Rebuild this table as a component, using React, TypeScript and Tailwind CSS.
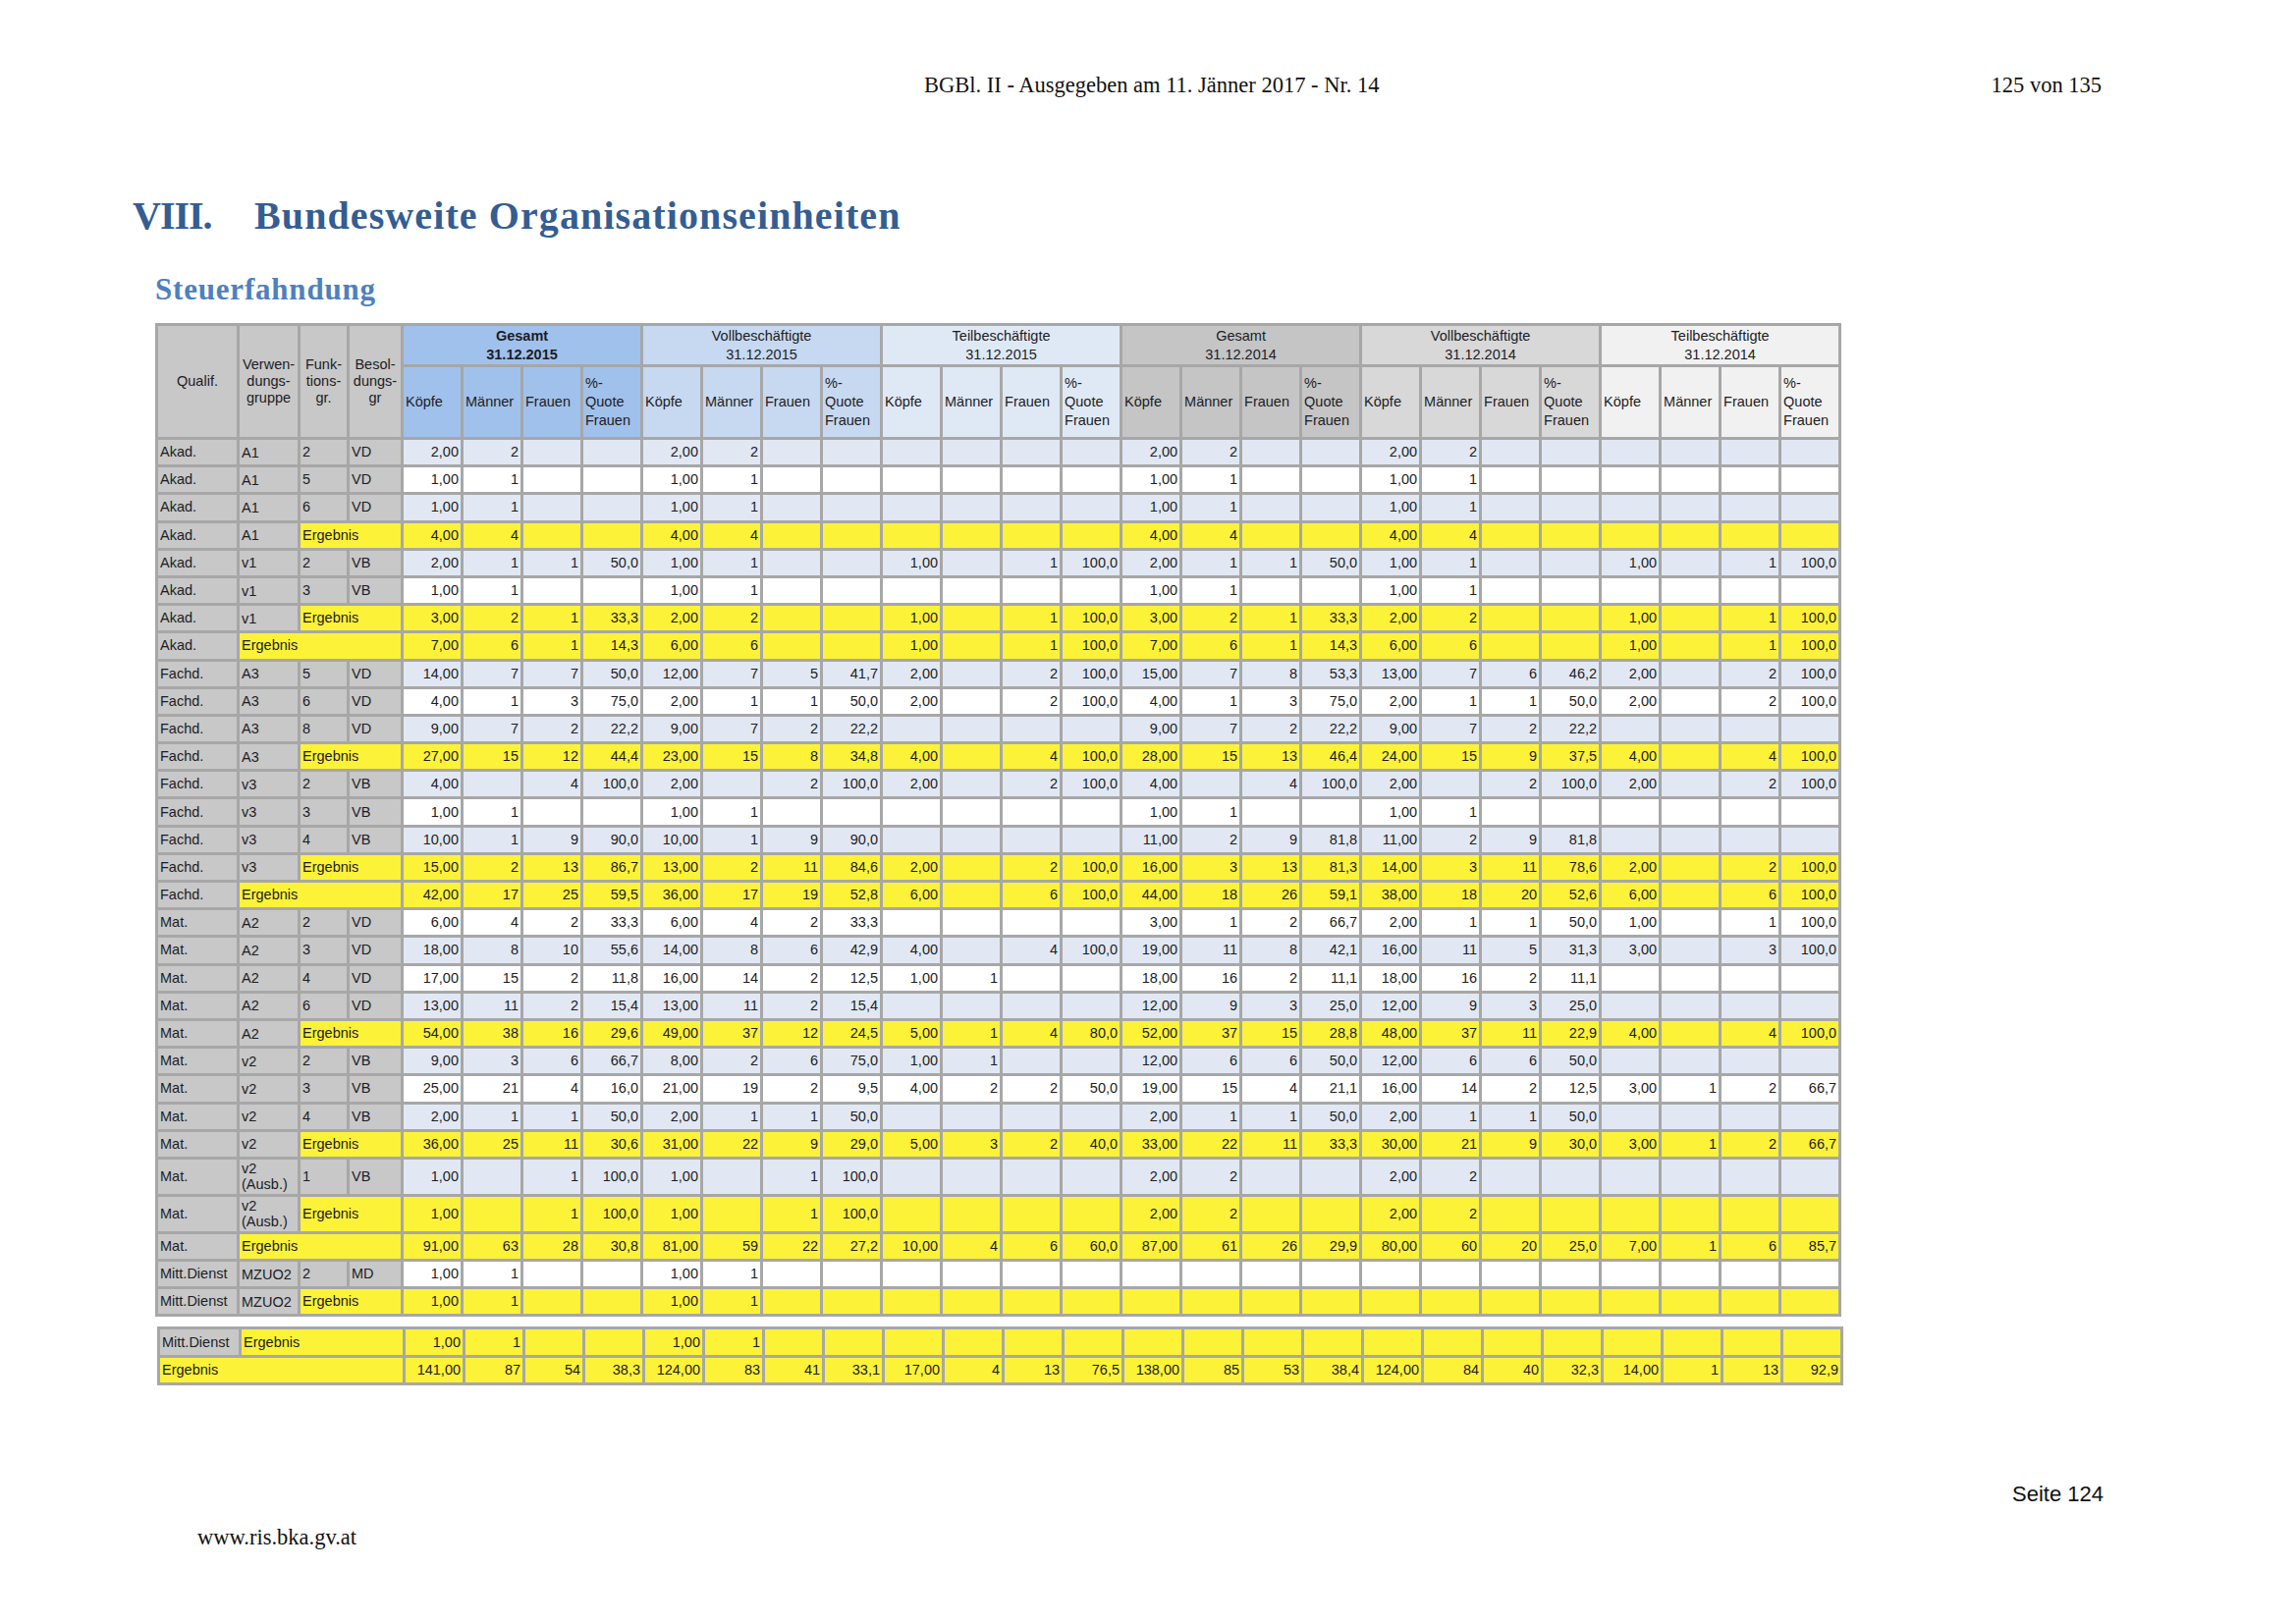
type Kind = 'row' | 'sub' | 'total'

type Row = {
  q: string
  v?: string
  f?: string
  b?: string
  kind: Kind
  tall?: boolean
  d: string
}

const rows: Row[] = [
  { q: 'Akad.', v: 'A1', f: '2', b: 'VD', kind: 'row', d: '2,00 2 _ _ 2,00 2 _ _ _ _ _ _ 2,00 2 _ _ 2,00 2 _ _ _ _ _ _' },
  { q: 'Akad.', v: 'A1', f: '5', b: 'VD', kind: 'row', d: '1,00 1 _ _ 1,00 1 _ _ _ _ _ _ 1,00 1 _ _ 1,00 1 _ _ _ _ _ _' },
  { q: 'Akad.', v: 'A1', f: '6', b: 'VD', kind: 'row', d: '1,00 1 _ _ 1,00 1 _ _ _ _ _ _ 1,00 1 _ _ 1,00 1 _ _ _ _ _ _' },
  { q: 'Akad.', v: 'A1', kind: 'sub', d: '4,00 4 _ _ 4,00 4 _ _ _ _ _ _ 4,00 4 _ _ 4,00 4 _ _ _ _ _ _' },
  { q: 'Akad.', v: 'v1', f: '2', b: 'VB', kind: 'row', d: '2,00 1 1 50,0 1,00 1 _ _ 1,00 _ 1 100,0 2,00 1 1 50,0 1,00 1 _ _ 1,00 _ 1 100,0' },
  { q: 'Akad.', v: 'v1', f: '3', b: 'VB', kind: 'row', d: '1,00 1 _ _ 1,00 1 _ _ _ _ _ _ 1,00 1 _ _ 1,00 1 _ _ _ _ _ _' },
  { q: 'Akad.', v: 'v1', kind: 'sub', d: '3,00 2 1 33,3 2,00 2 _ _ 1,00 _ 1 100,0 3,00 2 1 33,3 2,00 2 _ _ 1,00 _ 1 100,0' },
  { q: 'Akad.', kind: 'total', d: '7,00 6 1 14,3 6,00 6 _ _ 1,00 _ 1 100,0 7,00 6 1 14,3 6,00 6 _ _ 1,00 _ 1 100,0' },
  { q: 'Fachd.', v: 'A3', f: '5', b: 'VD', kind: 'row', d: '14,00 7 7 50,0 12,00 7 5 41,7 2,00 _ 2 100,0 15,00 7 8 53,3 13,00 7 6 46,2 2,00 _ 2 100,0' },
  { q: 'Fachd.', v: 'A3', f: '6', b: 'VD', kind: 'row', d: '4,00 1 3 75,0 2,00 1 1 50,0 2,00 _ 2 100,0 4,00 1 3 75,0 2,00 1 1 50,0 2,00 _ 2 100,0' },
  { q: 'Fachd.', v: 'A3', f: '8', b: 'VD', kind: 'row', d: '9,00 7 2 22,2 9,00 7 2 22,2 _ _ _ _ 9,00 7 2 22,2 9,00 7 2 22,2 _ _ _ _' },
  { q: 'Fachd.', v: 'A3', kind: 'sub', d: '27,00 15 12 44,4 23,00 15 8 34,8 4,00 _ 4 100,0 28,00 15 13 46,4 24,00 15 9 37,5 4,00 _ 4 100,0' },
  { q: 'Fachd.', v: 'v3', f: '2', b: 'VB', kind: 'row', d: '4,00 _ 4 100,0 2,00 _ 2 100,0 2,00 _ 2 100,0 4,00 _ 4 100,0 2,00 _ 2 100,0 2,00 _ 2 100,0' },
  { q: 'Fachd.', v: 'v3', f: '3', b: 'VB', kind: 'row', d: '1,00 1 _ _ 1,00 1 _ _ _ _ _ _ 1,00 1 _ _ 1,00 1 _ _ _ _ _ _' },
  { q: 'Fachd.', v: 'v3', f: '4', b: 'VB', kind: 'row', d: '10,00 1 9 90,0 10,00 1 9 90,0 _ _ _ _ 11,00 2 9 81,8 11,00 2 9 81,8 _ _ _ _' },
  { q: 'Fachd.', v: 'v3', kind: 'sub', d: '15,00 2 13 86,7 13,00 2 11 84,6 2,00 _ 2 100,0 16,00 3 13 81,3 14,00 3 11 78,6 2,00 _ 2 100,0' },
  { q: 'Fachd.', kind: 'total', d: '42,00 17 25 59,5 36,00 17 19 52,8 6,00 _ 6 100,0 44,00 18 26 59,1 38,00 18 20 52,6 6,00 _ 6 100,0' },
  { q: 'Mat.', v: 'A2', f: '2', b: 'VD', kind: 'row', d: '6,00 4 2 33,3 6,00 4 2 33,3 _ _ _ _ 3,00 1 2 66,7 2,00 1 1 50,0 1,00 _ 1 100,0' },
  { q: 'Mat.', v: 'A2', f: '3', b: 'VD', kind: 'row', d: '18,00 8 10 55,6 14,00 8 6 42,9 4,00 _ 4 100,0 19,00 11 8 42,1 16,00 11 5 31,3 3,00 _ 3 100,0' },
  { q: 'Mat.', v: 'A2', f: '4', b: 'VD', kind: 'row', d: '17,00 15 2 11,8 16,00 14 2 12,5 1,00 1 _ _ 18,00 16 2 11,1 18,00 16 2 11,1 _ _ _ _' },
  { q: 'Mat.', v: 'A2', f: '6', b: 'VD', kind: 'row', d: '13,00 11 2 15,4 13,00 11 2 15,4 _ _ _ _ 12,00 9 3 25,0 12,00 9 3 25,0 _ _ _ _' },
  { q: 'Mat.', v: 'A2', kind: 'sub', d: '54,00 38 16 29,6 49,00 37 12 24,5 5,00 1 4 80,0 52,00 37 15 28,8 48,00 37 11 22,9 4,00 _ 4 100,0' },
  { q: 'Mat.', v: 'v2', f: '2', b: 'VB', kind: 'row', d: '9,00 3 6 66,7 8,00 2 6 75,0 1,00 1 _ _ 12,00 6 6 50,0 12,00 6 6 50,0 _ _ _ _' },
  { q: 'Mat.', v: 'v2', f: '3', b: 'VB', kind: 'row', d: '25,00 21 4 16,0 21,00 19 2 9,5 4,00 2 2 50,0 19,00 15 4 21,1 16,00 14 2 12,5 3,00 1 2 66,7' },
  { q: 'Mat.', v: 'v2', f: '4', b: 'VB', kind: 'row', d: '2,00 1 1 50,0 2,00 1 1 50,0 _ _ _ _ 2,00 1 1 50,0 2,00 1 1 50,0 _ _ _ _' },
  { q: 'Mat.', v: 'v2', kind: 'sub', d: '36,00 25 11 30,6 31,00 22 9 29,0 5,00 3 2 40,0 33,00 22 11 33,3 30,00 21 9 30,0 3,00 1 2 66,7' },
  { q: 'Mat.', v: 'v2 (Ausb.)', f: '1', b: 'VB', kind: 'row', tall: true, d: '1,00 _ 1 100,0 1,00 _ 1 100,0 _ _ _ _ 2,00 2 _ _ 2,00 2 _ _ _ _ _ _' },
  { q: 'Mat.', v: 'v2 (Ausb.)', kind: 'sub', tall: true, d: '1,00 _ 1 100,0 1,00 _ 1 100,0 _ _ _ _ 2,00 2 _ _ 2,00 2 _ _ _ _ _ _' },
  { q: 'Mat.', kind: 'total', d: '91,00 63 28 30,8 81,00 59 22 27,2 10,00 4 6 60,0 87,00 61 26 29,9 80,00 60 20 25,0 7,00 1 6 85,7' },
  { q: 'Mitt.Dienst', v: 'MZUO2', f: '2', b: 'MD', kind: 'row', d: '1,00 1 _ _ 1,00 1 _ _ _ _ _ _ _ _ _ _ _ _ _ _ _ _ _ _' },
  { q: 'Mitt.Dienst', v: 'MZUO2', kind: 'sub', d: '1,00 1 _ _ 1,00 1 _ _ _ _ _ _ _ _ _ _ _ _ _ _ _ _ _ _' },
]

const groups = [
  { title: 'Gesamt', date: '31.12.2015', head: 'bg-[#a0c1ec]', bold: true },
  { title: 'Vollbeschäftigte', date: '31.12.2015', head: 'bg-[#c6d9f1]', bold: false },
  { title: 'Teilbeschäftigte', date: '31.12.2015', head: 'bg-[#dfe9f5]', bold: false },
  { title: 'Gesamt', date: '31.12.2014', head: 'bg-[#c5c5c5]', bold: false },
  { title: 'Vollbeschäftigte', date: '31.12.2014', head: 'bg-[#d8d8d8]', bold: false },
  { title: 'Teilbeschäftigte', date: '31.12.2014', head: 'bg-[#f1f1f1]', bold: false },
]

const label = 'bg-[#c8c8c8] px-[2px] text-left align-middle'
const yellow = 'bg-[#fcf238]'

function Cols() {
  return (
    <colgroup>
      <col className="w-[80px]" />
      <col className="w-[59px]" />
      <col className="w-[47px]" />
      <col className="w-[52px]" />
      {Array.from({ length: 24 }).map((_, i) => (
        <col key={i} className="w-[58px]" />
      ))}
    </colgroup>
  )
}

function DataCells({ d, bg }: { d: string; bg: string }) {
  return (
    <>
      {d.split(' ').map((v, i) => (
        <td key={i} className={`${bg} px-[2px] text-right align-middle`}>
          {v === '_' ? '' : v}
        </td>
      ))}
    </>
  )
}

export default function App() {
  return (
    <div className="relative h-[1653px] w-[2338px] overflow-hidden bg-white text-[#111]">
      <div className="flex items-baseline pl-[941px] pr-[198px] pt-[74px] font-['Liberation_Serif',serif] text-[22.5px] leading-[26px]">
        <span>BGBl. II - Ausgegeben am 11. Jänner 2017 - Nr. 14</span>
        <span className="ml-auto">125 von 135</span>
      </div>

      <h1 className="mt-[97px] flex pl-[135px] font-['Liberation_Serif',serif] text-[40px] font-bold leading-[46px] tracking-[1.1px] text-[#345d92]">
        <span className="w-[124px] tracking-[-1px]">VIII.</span>
        <span>Bundesweite Organisationseinheiten</span>
      </h1>

      <h2 className="mt-[34px] pl-[158px] font-['Liberation_Serif',serif] text-[31px] font-bold leading-[36px] tracking-[0.8px] text-[#4f80bd]">
        Steuerfahndung
      </h2>

      <div className="mt-[16px] pl-[158px] font-['Liberation_Sans',Arial,sans-serif] text-[14.5px] leading-[17px] text-[#1c1c24]">
        <table className="w-[1717px] table-fixed border-separate border-spacing-[3px] bg-[#a7a7a7]">
          <Cols />
          <thead>
            <tr className="h-[39px]">
              <th rowSpan={2} className="bg-[#c8c8c8] text-center align-middle font-normal">Qualif.</th>
              <th rowSpan={2} className="bg-[#c8c8c8] text-center align-middle font-normal">
                Verwen-<br />dungs-<br />gruppe
              </th>
              <th rowSpan={2} className="bg-[#c8c8c8] text-center align-middle font-normal">
                Funk-<br />tions-<br />gr.
              </th>
              <th rowSpan={2} className="bg-[#c8c8c8] text-center align-middle font-normal">
                Besol-<br />dungs-<br />gr
              </th>
              {groups.map((g, i) => (
                <th
                  key={i}
                  colSpan={4}
                  className={`${g.head} text-center align-middle leading-[19px] ${g.bold ? 'font-bold' : 'font-normal'}`}
                >
                  {g.title}
                  <br />
                  {g.date}
                </th>
              ))}
            </tr>
            <tr className="h-[71px]">
              {groups.map((g) =>
                ['Köpfe', 'Männer', 'Frauen', 'q'].map((h) => (
                  <th
                    key={g.title + g.date + h}
                    className={`${g.head} px-[2px] text-left align-middle font-normal leading-[19px]`}
                  >
                    {h === 'q' ? (
                      <>
                        %-
                        <br />
                        Quote
                        <br />
                        Frauen
                      </>
                    ) : (
                      h
                    )}
                  </th>
                )),
              )}
            </tr>
          </thead>
          <tbody>
            {rows.map((r, i) => {
              const bg = r.kind === 'row' ? (i % 2 === 0 ? 'bg-[#e1e8f3]' : 'bg-white') : yellow
              return (
                <tr key={i} className={r.tall ? 'h-[35px]' : 'h-[25.2px]'}>
                  <td className={label}>{r.q}</td>
                  {r.kind === 'total' ? (
                    <td colSpan={3} className={`${yellow} px-[2px] align-middle`}>Ergebnis</td>
                  ) : (
                    <>
                      <td className={`${label} leading-[16px]`}>
                        {r.v === 'v2 (Ausb.)' ? (
                          <>
                            v2
                            <br />
                            (Ausb.)
                          </>
                        ) : (
                          r.v
                        )}
                      </td>
                      {r.kind === 'sub' ? (
                        <td colSpan={2} className={`${yellow} px-[2px] align-middle`}>Ergebnis</td>
                      ) : (
                        <>
                          <td className={label}>{r.f}</td>
                          <td className={label}>{r.b}</td>
                        </>
                      )}
                    </>
                  )}
                  <DataCells d={r.d} bg={bg} />
                </tr>
              )
            })}
          </tbody>
        </table>

        <table className="ml-[2px] mt-[10px] w-[1714px] table-fixed border-separate border-spacing-[3px] bg-[#a7a7a7]">
          <Cols />
          <tbody>
            <tr className="h-[25.3px]">
              <td className={label}>Mitt.Dienst</td>
              <td colSpan={3} className={`${yellow} px-[2px] align-middle`}>Ergebnis</td>
              <DataCells d="1,00 1 _ _ 1,00 1 _ _ _ _ _ _ _ _ _ _ _ _ _ _ _ _ _ _" bg={yellow} />
            </tr>
            <tr className="h-[25.3px]">
              <td colSpan={4} className={`${yellow} px-[2px] align-middle`}>Ergebnis</td>
              <DataCells
                d="141,00 87 54 38,3 124,00 83 41 33,1 17,00 4 13 76,5 138,00 85 53 38,4 124,00 84 40 32,3 14,00 1 13 92,9"
                bg={yellow}
              />
            </tr>
          </tbody>
        </table>
      </div>

      <div className="mt-[98px] pr-[196px] text-right font-['Liberation_Sans',Arial,sans-serif] text-[22px] leading-[26px]">
        Seite 124
      </div>
      <div className="mt-[18px] pl-[201px] font-['Liberation_Serif',serif] text-[22.5px] leading-[26px]">
        www.ris.bka.gv.at
      </div>
    </div>
  )
}
